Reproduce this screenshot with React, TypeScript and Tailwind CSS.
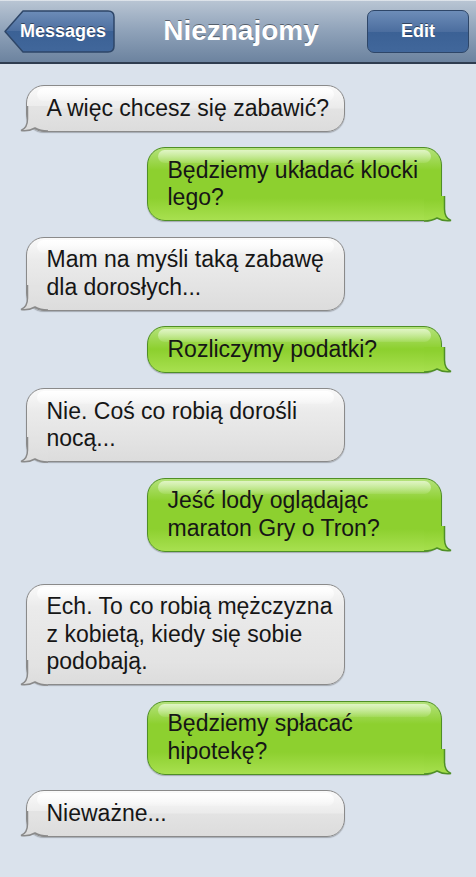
import React from "react";

type Msg = { from: "them" | "me"; lines: string[]; gapTop?: number };

const messages: Msg[] = [
  { from: "them", lines: ["A więc chcesz się zabawić?"] },
  { from: "me", lines: ["Będziemy układać klocki", "lego?"] },
  { from: "them", lines: ["Mam na myśli taką zabawę", "dla dorosłych..."] },
  { from: "me", lines: ["Rozliczymy podatki?"] },
  { from: "them", lines: ["Nie. Coś co robią dorośli", "nocą..."] },
  { from: "me", lines: ["Jeść lody oglądając", "maraton Gry o Tron?"] },
  { from: "them", lines: ["Ech. To co robią mężczyzna", "z kobietą, kiedy się sobie", "podobają."], gapTop: 16.5 },
  { from: "me", lines: ["Będziemy spłacać", "hipotekę?"] },
  { from: "them", lines: ["Nieważne..."] },
];

// Tail at the lower corner; its fill follows the bubble's bottom gradient
function Tail({ mine, id }: { mine: boolean; id: string }) {
  const bottom = mine ? "#a8e050" : "#dcdcdc";
  const top = mine ? "#8dd02f" : "#e3e3e3";
  const stroke = mine ? "#4f8f26" : "#8a8a8a";
  return (
    <svg
      width="28"
      height="26"
      viewBox="0 0 28 26"
      className={
        mine
          ? "absolute right-[-11px] bottom-[-1.5px] scale-x-[-1]"
          : "absolute left-[-7.5px] bottom-[-1.5px]"
      }
    >
      <defs>
        <linearGradient id={id} gradientUnits="userSpaceOnUse" x1="0" y1="26" x2="0" y2="0">
          <stop offset="0" stopColor={bottom} />
          <stop offset="0.85" stopColor={top} />
          <stop offset="1" stopColor={top} />
        </linearGradient>
      </defs>
      <path
        d="M7.5 0 L7.5 13 Q7.5 22 1 24.5 Q9 25.5 15 22 Q20 25 28 25 L28 0 Z"
        fill={`url(#${id})`}
      />
      <path
        d="M7.5 0 L7.5 13 Q7.5 22 1 24.5 Q9 25.5 15 22 Q20 25 28 25"
        fill="none"
        stroke={stroke}
        strokeWidth="1.5"
      />
    </svg>
  );
}

function Bubble({ msg, idx }: { msg: Msg; idx: number }) {
  const mine = msg.from === "me";
  return (
    <div
      className={
        mine
          ? "relative ml-[147px] w-[295px] rounded-[18px] border-[1.5px] border-[#4f8f26] bg-[linear-gradient(to_top,#a8e050_0px,#8dd02f_22px,#8dd02f_calc(100%-22px),#b4e27c_100%)] shadow-[0_1px_1px_rgba(0,0,0,0.25)]"
          : "relative ml-[26px] w-[319px] rounded-[18px] border-[1.5px] border-[#8a8a8a] bg-[linear-gradient(to_top,#dcdcdc_0px,#e3e3e3_22px,#ebebeb_calc(100%-22px),#fafafa_100%)] shadow-[0_1px_1px_rgba(0,0,0,0.25)]"
      }
      style={msg.gapTop ? { marginTop: msg.gapTop } : undefined}
    >
      <Tail mine={mine} id={`tail-${idx}`} />
      <div
        className={
          mine
            ? "pointer-events-none absolute left-[10px] right-[10px] top-[2px] h-[13px] rounded-full bg-gradient-to-b from-[#e0f5c4] to-[#b8e57c]/30"
            : "pointer-events-none absolute left-[10px] right-[10px] top-[2px] h-[13px] rounded-full bg-gradient-to-b from-white to-white/20"
        }
      />
      <div className="relative py-[8.5px] pl-[19.5px] pr-[8px] text-[23px] leading-[27.5px] text-[#161616] whitespace-nowrap">
        {msg.lines.map((l, i) => (
          <React.Fragment key={i}>
            {i > 0 && <br />}
            {l}
          </React.Fragment>
        ))}
      </div>
    </div>
  );
}

export default function App() {
  return (
    <div className="flex h-screen w-full flex-col overflow-hidden bg-[#dae2ec] font-['Liberation_Sans',Arial,sans-serif]">
      <header className="flex h-[64px] shrink-0 items-center justify-between border-b-[2px] border-[#2f3d50] bg-gradient-to-b from-[#bac6d4] via-[#8fa2b9] to-[#6c839f] pl-[4px] pr-[7px] shadow-[inset_0_1px_0_rgba(255,255,255,0.5)]">
        <div className="relative flex h-[43px] w-[111px] items-center justify-end pr-[9px]">
          <svg width="111" height="43" viewBox="0 0 111 43" className="absolute inset-0">
            <defs>
              <linearGradient id="backGrad" x1="0" y1="0" x2="0" y2="1">
                <stop offset="0" stopColor="#6d8db8" />
                <stop offset="0.5" stopColor="#4c6e9f" />
                <stop offset="0.5" stopColor="#3b6195" />
                <stop offset="1" stopColor="#41679b" />
              </linearGradient>
            </defs>
            <path
              d="M1 21.5 L19 1 L104 1 Q110 1 110 7 L110 36 Q110 42 104 42 L19 42 Z"
              fill="url(#backGrad)"
              stroke="#2e4668"
              strokeWidth="1.5"
              strokeLinejoin="round"
            />
          </svg>
          <span className="relative text-[18px] font-bold text-white [text-shadow:0_-1px_0_rgba(0,0,0,0.45)]">
            Messages
          </span>
        </div>
        <h1 className="text-[28px] font-bold text-white [text-shadow:0_-1px_0_rgba(0,0,0,0.45)]">
          Nieznajomy
        </h1>
        <div className="flex h-[43px] w-[102px] items-center justify-center rounded-[7px] border-[1.5px] border-[#2e4668] bg-[linear-gradient(to_bottom,#6d8db8_0%,#4c6e9f_50%,#3b6195_50%,#41679b_100%)]">
          <span className="text-[18px] font-bold text-white [text-shadow:0_-1px_0_rgba(0,0,0,0.45)]">
            Edit
          </span>
        </div>
      </header>
      <main className="flex flex-col gap-[15.5px] pt-[21px]">
        {messages.map((m, i) => (
          <Bubble key={i} msg={m} idx={i} />
        ))}
      </main>
    </div>
  );
}
